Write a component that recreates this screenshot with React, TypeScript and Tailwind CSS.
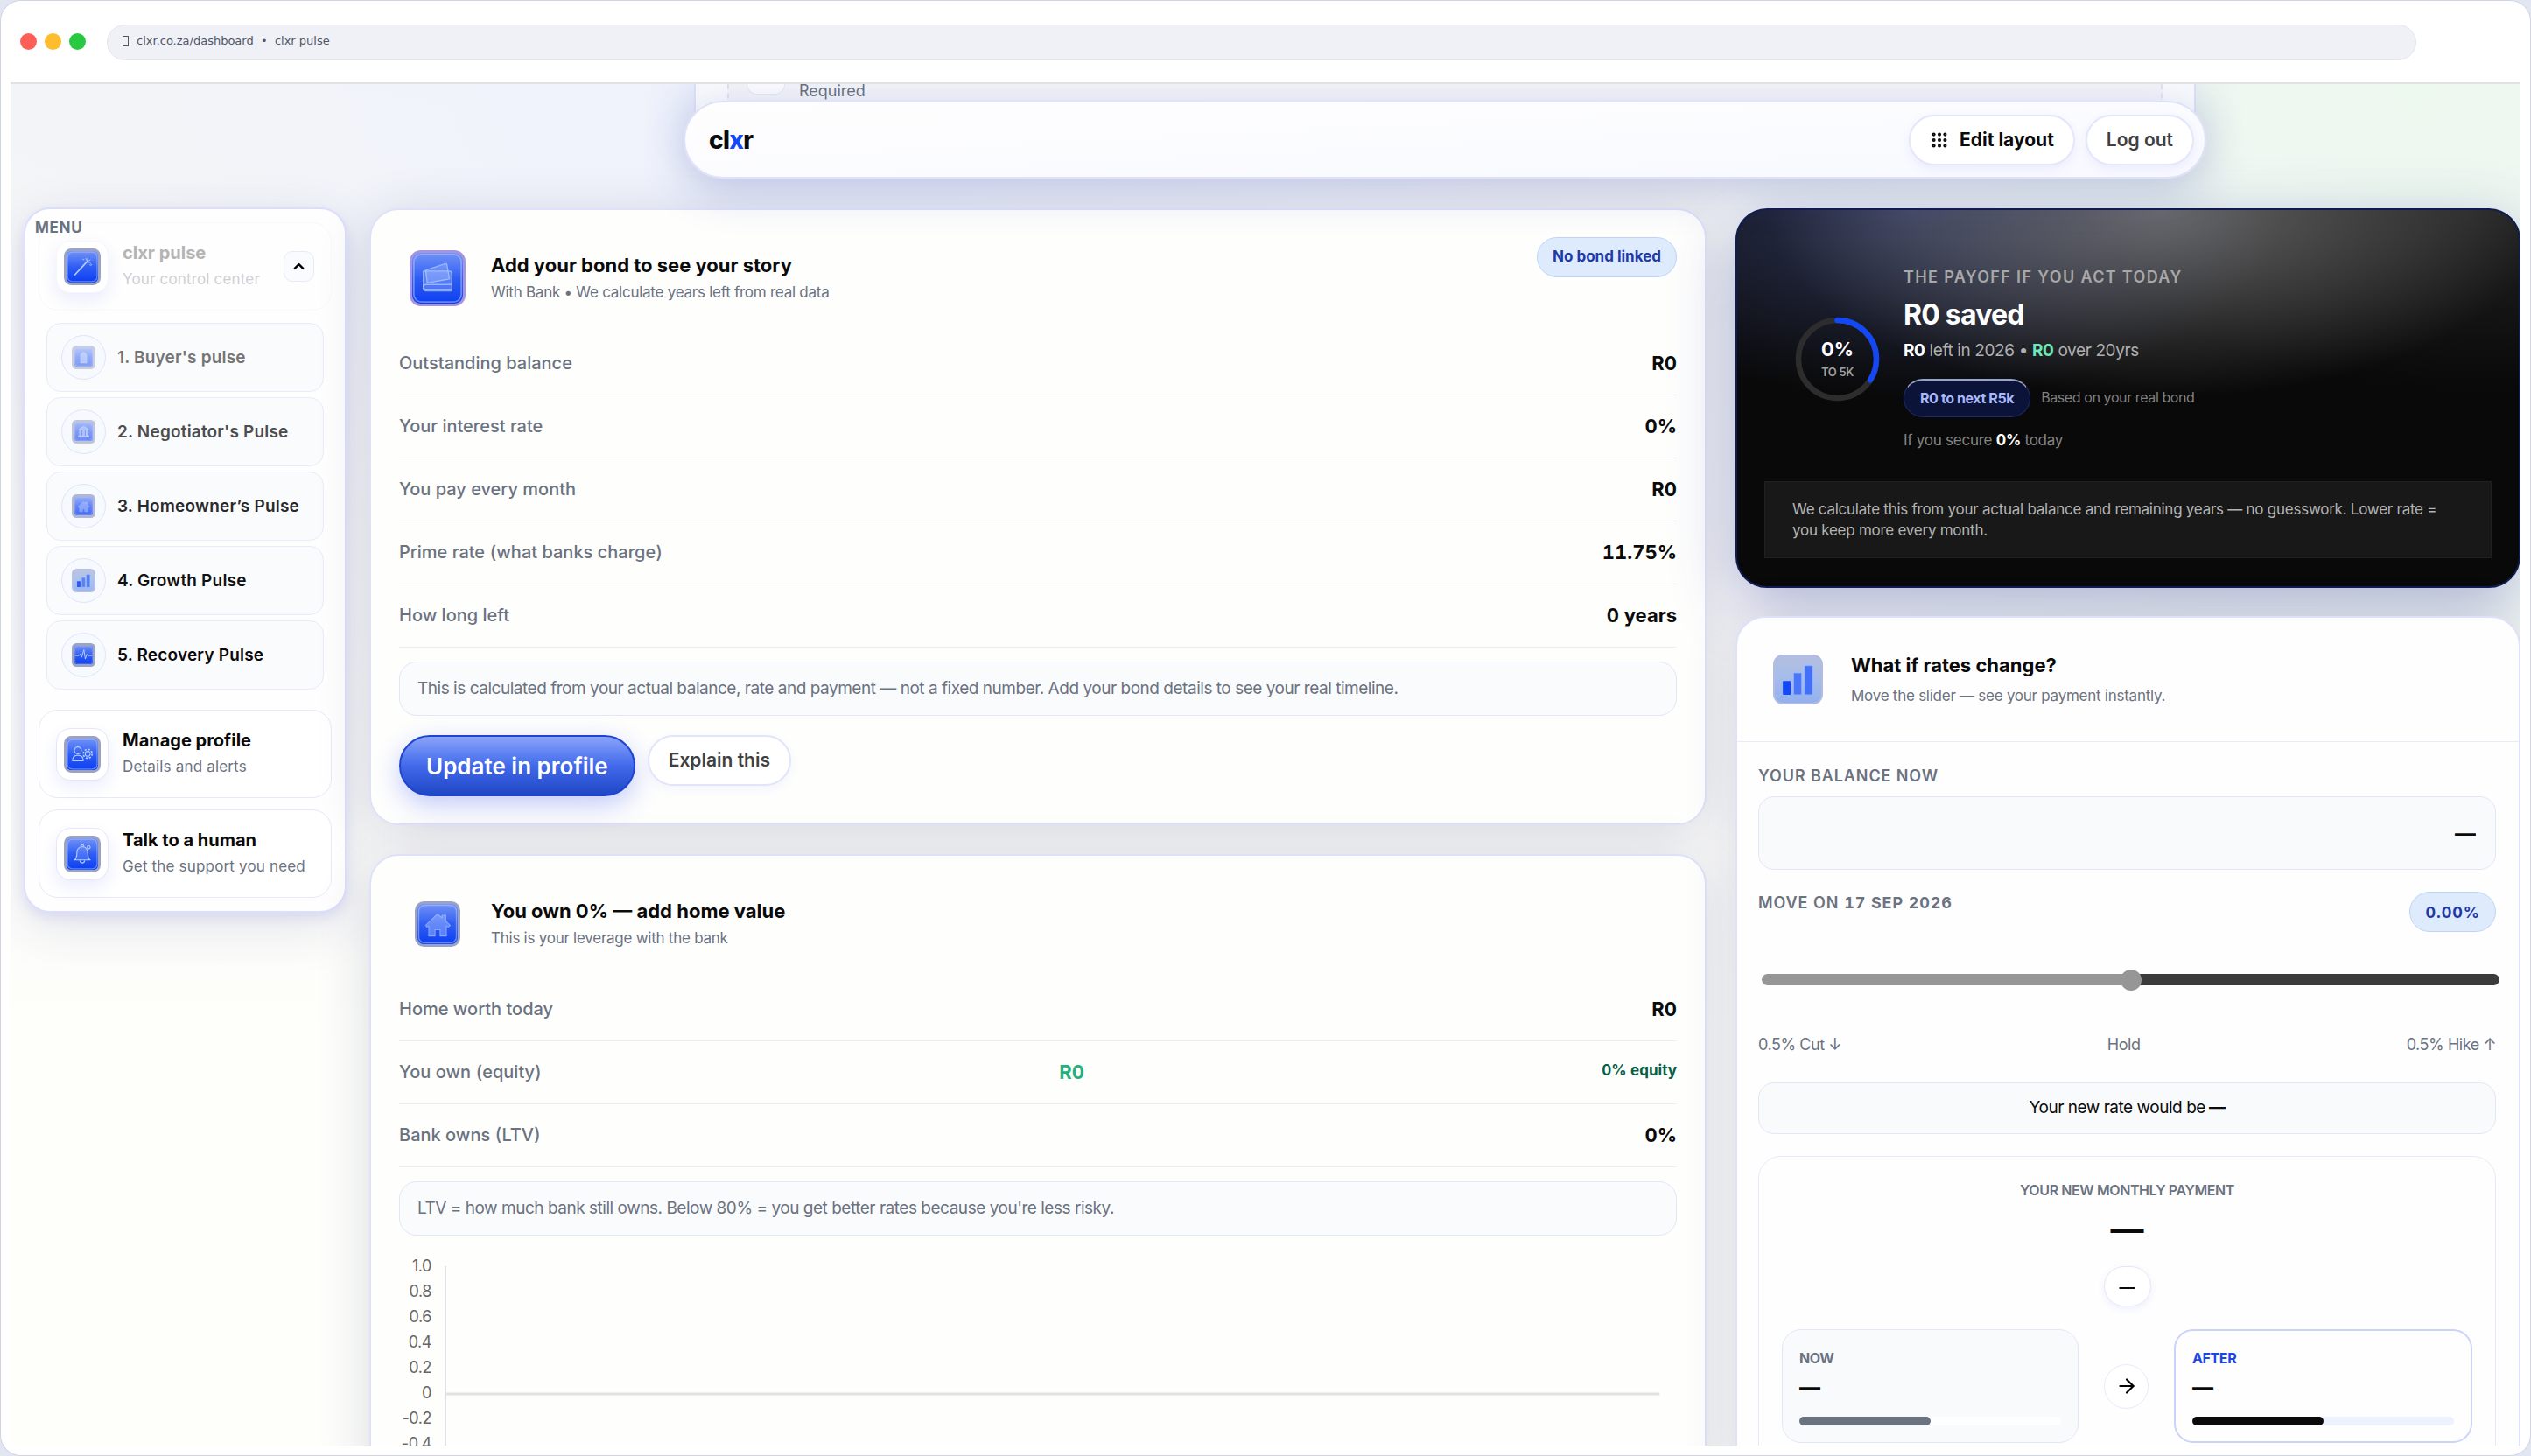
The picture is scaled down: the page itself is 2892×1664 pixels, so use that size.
import React from 'react';
import { ArrowRight, ChevronUp, Grip } from 'lucide-react';

type Glyph = 'wand' | 'door' | 'bank' | 'home' | 'bars' | 'pulse' | 'profile' | 'bell' | 'wallet';

const glyphs: Record<Glyph, React.ReactNode> = {
  wand: (
    <g strokeLinecap="round">
      <path d="M17 48 42 21" strokeWidth="3" />
      <path d="M42 21l-3-6M42 21l6-3M42 21l6 3M42 21l1-7" strokeWidth="1.5" />
      <circle cx="49" cy="28" r="1.5" />
      <circle cx="34" cy="17" r="1" />
    </g>
  ),
  door: <path d="M21 52V24q0-3 3-5l8-6 8 6q3 2 3 5v28z" fill="currentColor" fillOpacity=".6" />,
  bank: (
    <g fill="currentColor" fillOpacity=".45" strokeWidth="2">
      <path d="M15 25q0-3 17-11 17 8 17 11z" />
      <path d="M18 29h5v15h-5zM29.500 29h5v15h-5zM41 29h5v15h-5zM14 46h36v4H14z" />
    </g>
  ),
  home: (
    <path
      d="M13 34 32 16l7 6v-4h6v9l7 7-3 3-3-2v16H36V41h-8v10H18V35l-3 2z"
      fill="currentColor"
      fillOpacity=".4"
      strokeOpacity=".6"
      strokeWidth="1.5"
    />
  ),
  bars: null,
  pulse: <path d="M2 34h14l4-5 5 11 8-26 5 32 5-17 4 5h15" strokeWidth="3" strokeLinejoin="round" />,
  profile: (
    <g strokeWidth="2">
      <circle cx="23" cy="24" r="7" />
      <path d="M12 45q0-11 11-11t11 11z" strokeLinejoin="round" />
      <circle cx="43" cy="31" r="5" />
      <circle cx="43" cy="31" r="9" strokeWidth="3" strokeDasharray="4 3" />
    </g>
  ),
  bell: (
    <g strokeWidth="2" strokeLinejoin="round">
      <path d="M16 44q5-4 5-14 0-12 11-13 11 1 11 13 0 10 5 14z" fill="currentColor" fillOpacity=".2" />
      <path d="M27 45q1 5 5 5t5-5M29 17q0-4 3-4t3 4" />
      <circle cx="45" cy="18" r="3" />
    </g>
  ),
  wallet: (
    <g strokeWidth="1.500" strokeLinejoin="round" strokeOpacity=".7">
      <path d="m17 22 24-8q3-1 3 2l3 17-28 5z" fill="currentColor" fillOpacity=".3" />
      <path d="M14 23h33q3 0 3 3v20H17q-3 0-3-3z" fill="currentColor" fillOpacity=".3" />
      <path d="M14 43q0-3 3-3h33M50 46v2H17q-3 0-3-4" />
    </g>
  ),
};

interface IconTileProps {
  glyph: Glyph;
  className?: string;
}

const IconTile: React.FC<IconTileProps> = ({ glyph, className = '' }) => {
  if (glyph === 'bars') {
    return (
      <span
        className={`block shrink-0 rounded-[20%] border-2 border-[#b3bce0] bg-linear-to-b from-[#b4bfdf] via-[#a4bcec] to-[#93b0ef] ${className}`}
      >
        <svg viewBox="0 0 64 64" className="size-full" aria-hidden="true">
          <rect x="11" y="34" width="11" height="19" rx="1" fill="#1548f5" />
          <rect x="26" y="23" width="11" height="30" rx="1" fill="#4a76f7" stroke="#8fb0ff" />
          <rect x="41" y="13" width="11" height="40" rx="1" fill="#4270f7" stroke="#8fb0ff" />
        </svg>
      </span>
    );
  }
  return (
    <span
      className={`block shrink-0 rounded-[20%] border-3 bg-linear-to-b from-[#7391f5] via-[#2f5df3] to-[#0a3df0] text-[#b5ccff] ${glyph === 'wallet' ? 'border-[#a794e0]' : 'border-[#9ba2c4]'} ${className}`}
    >
      <svg
        viewBox="0 0 64 64"
        className="size-full"
        fill="none"
        stroke="currentColor"
        aria-hidden="true"
      >
        <rect x="2" y="2" width="60" height="60" rx="10" strokeOpacity=".5" strokeWidth="2" />
        {glyphs[glyph]}
      </svg>
    </span>
  );
};

const pulses: { label: string; glyph: Glyph; text: string; icon: string }[] = [
  { label: "1. Buyer's pulse", glyph: 'door', text: 'text-[#757575]', icon: 'opacity-50' },
  { label: "2. Negotiator's Pulse", glyph: 'bank', text: 'text-[#4d4d4f]', icon: 'opacity-60' },
  { label: '3. Homeowner’s Pulse', glyph: 'home', text: 'text-[#29292b]', icon: 'opacity-75' },
  { label: '4. Growth Pulse', glyph: 'bars', text: 'text-[#111112]', icon: 'opacity-90' },
  { label: '5. Recovery Pulse', glyph: 'pulse', text: 'text-[#0a0a0a]', icon: '' },
];

const bondRows = [
  ['Outstanding balance', 'R0'],
  ['Your interest rate', '0%'],
  ['You pay every month', 'R0'],
  ['Prime rate (what banks charge)', '11.75%'],
  ['How long left', '0 years'],
];

const ticks = ['1.0', '0.8', '0.6', '0.4', '0.2', '0', '-0.2', '-0.4'];

interface MenuCardProps {
  title: string;
  subtitle: string;
  glyph: Glyph;
  faded?: boolean;
  children?: React.ReactNode;
}

const MenuCard: React.FC<MenuCardProps> = ({ title, subtitle, glyph, faded, children }) => (
  <div
    className={`flex h-[101px] items-center rounded-[22px] border px-[19px] ${faded ? 'border-[#f8f8fd]' : 'border-[#e8e8f9] bg-white'}`}
  >
    <span
      className={`flex size-[60px] shrink-0 items-center justify-center rounded-2xl border bg-white shadow-[0_8px_18px_rgba(60,80,240,0.1)] ${faded ? 'border-[#f6f6fd]' : 'border-[#e6e6fa]'}`}
    >
      <IconTile glyph={glyph} className="size-[42px]" />
    </span>
    <a href="#menu" className="ml-4 flex-1 whitespace-nowrap">
      <span className={`block text-[20px] leading-7 font-bold ${faded ? 'text-[#b4b4b4]' : 'text-[#0a0a0a]'}`}>
        {title}
      </span>
      <span
        className={`block text-[17px] leading-8 tracking-[0.01em] ${faded ? 'text-[#cfcfd3]' : 'text-[#6b7280]'}`}
      >
        {subtitle}
      </span>
    </a>
    {children}
  </div>
);

const Sidebar: React.FC = () => (
  <nav className="mt-[141px] w-[369px] shrink-0 self-start rounded-[30px] border-2 border-[#dcdffb] bg-[#fefefe] px-[15px] pt-[9px] pb-[15px] shadow-[0_6px_14px_rgba(70,80,220,0.12),0_16px_60px_rgba(40,50,120,0.12)]">
    <h2 className="relative -ml-1 text-[17px] leading-6 font-bold tracking-[0.04em] text-[#6b7280]">MENU</h2>
    <div className="-mt-[18px]">
      <MenuCard title="clxr pulse" subtitle="Your control center" glyph="wand" faded>
        <button
          type="button"
          aria-label="Collapse menu"
          className="flex size-[35px] shrink-0 items-center justify-center rounded-[10px] border border-[#e8ebf6] bg-[#fafbfe] text-black"
        >
          <ChevronUp size={19} strokeWidth={3} />
        </button>
      </MenuCard>
    </div>
    <ul className="mt-3.5 flex flex-col gap-1.5 px-[9px]">
      {pulses.map((p) => (
        <li key={p.label}>
          <a
            href="#pulse"
            className="flex h-[79px] items-center gap-[13px] rounded-2xl border border-[#e9ebf8] bg-[#fafbfd] pl-4"
          >
            <span className="flex size-[51px] shrink-0 items-center justify-center rounded-full border border-[#dfe5fb] bg-[#f6f9fe]">
              <IconTile glyph={p.glyph} className={`size-[27px] ${p.icon}`} />
            </span>
            <span className={`text-[19px] leading-6 font-semibold tracking-[0.01em] whitespace-nowrap ${p.text}`}>
              {p.label}
            </span>
          </a>
        </li>
      ))}
    </ul>
    <div className="mt-[23px] flex flex-col gap-[13px]">
      <MenuCard title="Manage profile" subtitle="Details and alerts" glyph="profile" />
      <MenuCard title="Talk to a human" subtitle="Get the support you need" glyph="bell" />
    </div>
  </nav>
);

const TopBar: React.FC = () => (
  <div className="flex h-[142px] flex-col items-center">
    <div className="flex h-12 w-full max-w-[1716px] border-x-2 border-[#dcdffb] bg-[#f9fafd] px-9 shadow-[0_10px_60px_rgba(40,60,160,0.2)]">
      <div className="flex flex-1 gap-4 border-x-2 border-dashed border-[#e0e3ef] bg-[#f3f4f9] pl-5">
        <span className="h-3 w-11 rounded-b-xl border border-t-0 border-[#e6e8f3] bg-[#fcfcff]" />
        <span className="text-[18px] leading-4 text-[#6b7280]">Required</span>
      </div>
    </div>
    <header className="relative -mt-[29px] flex h-[89px] w-full max-w-[1740px] shrink-0 items-center justify-between rounded-full border-2 border-[#dfe1f8] bg-linear-to-br from-[#fefefe] to-[#f8f9ff] pr-3 pl-[27px] shadow-[0_14px_50px_rgba(40,60,160,0.24)]">
      <a href="#home" className="text-[28px] leading-8 font-extrabold tracking-tight text-[#0a0a0a]">
        cl<span className="text-[#1548f5]">x</span>r
      </a>
      <div className="flex gap-3">
        <button
          type="button"
          className="flex h-[58px] items-center gap-3 rounded-full border-2 border-[#e4e6fa] bg-white px-[22px] text-[21px] font-bold text-[#0a0a0a] shadow-[0_4px_12px_rgba(60,80,240,0.08)]"
        >
          <Grip size={22} strokeWidth={2.5} />
          Edit layout
        </button>
        <button
          type="button"
          className="h-[58px] rounded-full border-2 border-[#e4e6fa] bg-white px-[22px] text-[21px] font-semibold text-[#404040] shadow-[0_4px_12px_rgba(60,80,240,0.08)]"
        >
          Log out
        </button>
      </div>
    </header>
  </div>
);

interface StoryCardProps {
  title: string;
  subtitle: string;
  glyph: Glyph;
  tileClass: string;
  badge?: string;
  children: React.ReactNode;
}

const StoryCard: React.FC<StoryCardProps> = ({ title, subtitle, glyph, tileClass, badge, children }) => (
  <section className="rounded-[34px] border-2 border-[#dfe1fa] bg-[#fefefd] pt-[31px] pr-8 pb-[31px] pl-[32px] shadow-[0_10px_60px_rgba(30,40,100,0.16)]">
    <div className="mb-[16px] flex h-[93px] items-center">
      <span className="flex w-[88px] justify-center">
        <IconTile glyph={glyph} className={tileClass} />
      </span>
      <div className="ml-[17px] flex-1">
        <h2 className="text-[22px] leading-7 font-bold text-[#0a0a0a]">{title}</h2>
        <p className="mt-1 text-[17px] leading-[26px] tracking-[-0.015em] text-[#6b7280]">{subtitle}</p>
      </div>
      {badge && (
        <span className="flex h-[46px] items-center self-start rounded-full border border-[#bfd3f8] bg-[#deebfd] px-[17px] text-[17px] font-bold text-[#1e3aa8]">
          {badge}
        </span>
      )}
    </div>
    {children}
  </section>
);

const Row: React.FC<{ label: string; children: React.ReactNode }> = ({ label, children }) => (
  <div className="flex h-[72px] items-center justify-between border-b border-[#ececf1] pb-0.5 tabular-nums">
    <dt className="text-[20px] leading-7 font-medium text-[#6b7280]">{label}</dt>
    {children}
  </div>
);

const Note: React.FC<{ children: React.ReactNode }> = ({ children }) => (
  <p className="mt-4 flex h-[62px] items-center rounded-[20px] border border-[#e3e6f6] bg-[#fafbfd] px-5 text-[19px] tracking-tight text-[#6b7280]">
    {children}
  </p>
);

const EquityChart: React.FC = () => (
  <div className="mt-5 flex">
    <div className="w-[37px] text-right text-[18px] tracking-tight text-[#666]">
      {ticks.map((t) => (
        <div key={t} className="h-[29px] leading-[29px]">
          {t}
        </div>
      ))}
    </div>
    <svg className="ml-[15px] h-[232px] flex-1" aria-hidden="true">
      <line x1="1" y1="15" x2="1" y2="232" stroke="#e2e2e6" strokeWidth="2" />
      <line x1="1" y1="161" x2="98.600%" y2="161" stroke="#e2e2e4" strokeWidth="3" />
    </svg>
  </div>
);

const PayoffCard: React.FC = () => (
  <section className="rounded-[36px] border-2 border-[#101c50] bg-[#090909] bg-[radial-gradient(ellipse_50%_50%_at_54%_0%,rgba(150,150,150,0.64),transparent),radial-gradient(ellipse_48%_50%_at_22%_0%,rgba(76,88,150,0.55),transparent),radial-gradient(ellipse_50%_48%_at_95%_0%,rgba(70,70,70,0.4),transparent)] px-[31px] pt-16 pb-8 shadow-[0_20px_70px_rgba(60,70,160,0.38)]">
    <div className="flex items-center pl-[35px]">
      <div className="grid size-[97px] shrink-0 place-items-center">
        <svg
          viewBox="0 0 98 98"
          className="col-start-1 row-start-1 size-full"
          fill="none"
          strokeWidth="6.500"
          strokeLinecap="round"
        >
          <circle cx="49" cy="49" r="45" stroke="#2d2d2d" />
          <circle
            cx="49"
            cy="49"
            r="45"
            stroke="#1548f5"
            pathLength="100"
            strokeDasharray="34 66"
            transform="rotate(-90 49 49)"
          />
        </svg>
        <div className="col-start-1 row-start-1 pt-0.5 text-center">
          <div className="text-[22px] leading-7 font-bold text-white">0%</div>
          <div className="text-[13px] leading-6 font-semibold tracking-tight text-[#a0a0a0]">TO 5K</div>
        </div>
      </div>
      <div className="ml-[27px]">
        <h2 className="text-[18px] leading-[26px] font-semibold tracking-[0.075em] text-[#a8a8a8]">
          THE PAYOFF IF YOU ACT TODAY
        </h2>
        <p className="mt-2.5 text-[32px] leading-10 font-bold tracking-tight text-white">R0 saved</p>
        <p className="mt-[7px] text-[19px] leading-7 tracking-[-0.02em] text-[#b0b0b0]">
          <b className="font-bold text-white">R0</b> left in 2026 • <b className="font-bold text-[#6ee7b7]">R0</b> over
          20yrs
        </p>
        <div className="mt-[18px] flex items-center gap-3">
          <span className="flex h-11 items-center rounded-full border border-t-2 border-[#1b2a6b] border-t-[#9aa3c9] bg-[#0b1438] px-[18px] pb-0.5 text-[16px] font-bold tracking-tight text-[#a9b8fb]">
            R0 to next R5k
          </span>
          <span className="pb-0.5 text-[16px] tracking-tight text-[#808080]">Based on your real bond</span>
        </div>
        <p className="mt-[13px] text-[17px] leading-[26px] tracking-[-0.015em] text-[#858585]">
          If you secure <b className="font-bold text-white">0%</b> today
        </p>
      </div>
    </div>
    <p className="mt-[34px] border border-[#202024] bg-[#181818] px-[31px] py-[19px] text-[17px] leading-6 tracking-[-0.015em] text-[#b3b3b3]">
      We calculate this from your actual balance and remaining years — no guesswork. Lower rate =<br />
      you keep more every month.
    </p>
  </section>
);

const RatesCard: React.FC = () => (
  <section className="rounded-[34px] border-2 border-[#dfe1fa] bg-[#fefefe] shadow-[0_10px_60px_rgba(30,40,100,0.16)]">
    <div className="flex h-[142px] items-center border-b border-[#e9ebf5] px-6">
      <span className="flex w-[90px] justify-center">
        <IconTile glyph="bars" className="size-[57px]" />
      </span>
      <div className="ml-4">
        <h2 className="text-[22px] leading-7 font-bold text-[#0a0a0a]">What if rates change?</h2>
        <p className="mt-2 text-[17px] leading-[26px] tracking-[-0.015em] text-[#6b7280]">
          Move the slider — see your payment instantly.
        </p>
      </div>
    </div>
    <div className="pt-[26px] pr-[26px] pb-10 pl-6">
      <label htmlFor="balance" className="block text-[18px] leading-[26px] font-semibold tracking-wider text-[#6b7280]">
        YOUR BALANCE NOW
      </label>
      <input
        id="balance"
        readOnly
        value="—"
        className="mt-2.5 block h-[84px] w-full rounded-[18px] border border-[#e3e6f8] bg-[#f9fafc] px-[22px] text-right text-[24px] font-bold text-[#0a0a0a]"
      />
      <div className="mt-[25px] flex items-start justify-between tabular-nums">
        <label htmlFor="move" className="text-[18px] leading-[26px] font-semibold tracking-wider text-[#6b7280]">
          MOVE ON <b className="font-bold">17 SEP 2026</b>
        </label>
        <output
          htmlFor="move"
          className="flex h-[46px] items-center rounded-full border border-[#bfd3f8] bg-[#deebfd] px-[17px] text-[18px] font-bold tracking-wider text-[#1e3aa8]"
        >
          0.00%
        </output>
      </div>
      <input
        id="move"
        type="range"
        min={-50}
        max={50}
        defaultValue={0}
        className="mt-12 ml-1 block h-[13px] w-full appearance-none rounded-full bg-[linear-gradient(to_right,#969696_50%,#3b3b3b_50%)] [&::-webkit-slider-thumb]:size-6 [&::-webkit-slider-thumb]:appearance-none [&::-webkit-slider-thumb]:rounded-full [&::-webkit-slider-thumb]:bg-[#969696]"
      />
      <div className="mt-[55px] flex justify-between text-[18px] leading-[26px] tracking-tight text-[#6b7280]">
        <span>0.5% Cut ↓</span>
        <span>Hold</span>
        <span>0.5% Hike ↑</span>
      </div>
      <p className="mt-[30px] flex h-[59px] items-center justify-center gap-1 rounded-[18px] border border-[#e3e6f6] bg-[#f9fafc] text-[19px] tracking-tight text-[#0a0a0a]">
        Your new rate would be <b className="font-bold">—</b>
      </p>
      <div className="mt-[25px] flex flex-col items-center rounded-[26px] border border-[#e8e9f8] px-[26px] pt-[25px] pb-8">
        <h3 className="text-[16px] leading-[26px] font-semibold tracking-tight text-[#6b7280]">
          YOUR NEW MONTHLY PAYMENT
        </h3>
        <p className="mt-2 text-[38px] leading-[46px] font-extrabold text-[#0a0a0a]">—</p>
        <span className="mt-5 flex h-[46px] items-center rounded-full border border-[#e4e6fa] bg-white px-[17px] text-[18px] font-semibold text-[#0a0a0a] shadow-[0_3px_8px_rgba(60,80,240,0.08)]">
          —
        </span>
        <div className="mt-[26px] flex w-full items-center gap-[29px]">
          <div className="h-[130px] flex-1 rounded-[22px] border border-[#e3e6fa] bg-[#f9fafc] px-[19px] pt-5">
            <h4 className="text-[16px] leading-6 font-bold tracking-tight text-[#6b7280]">NOW</h4>
            <p className="mt-1.5 text-[24px] leading-8 font-bold text-[#0a0a0a]">—</p>
            <div className="mt-[17px] h-2.5 rounded-full bg-white">
              <div className="h-full w-1/2 rounded-full bg-[#6b7280]" />
            </div>
          </div>
          <span className="flex size-[51px] items-center justify-center rounded-full border border-[#e8eafb] bg-white text-black">
            <ArrowRight size={26} />
          </span>
          <div className="h-[130px] flex-1 rounded-[22px] border-2 border-[#ccd3f9] bg-[#fefefe] px-[19px] pt-[19px]">
            <h4 className="text-[16px] leading-6 font-bold tracking-tight text-[#1d45e6]">AFTER</h4>
            <p className="mt-1.5 text-[24px] leading-8 font-bold text-[#0a0a0a]">—</p>
            <div className="mt-[17px] h-2.5 rounded-full bg-[#eef2fe]">
              <div className="h-full w-1/2 rounded-full bg-[#0a0a0a]" />
            </div>
          </div>
        </div>
      </div>
    </div>
  </section>
);

export default function App() {
  return (
    <div className="h-screen bg-[#e2e6f2] font-['Inter',sans-serif]">
      <div className="flex h-full flex-col overflow-hidden rounded-[24px] border border-[#ced4e6] bg-white px-[11px] pb-[11px]">
        <div className="flex h-[95px] shrink-0 items-center border-b-2 border-[#e1e2e1] pl-[11px]">
          <div className="flex gap-[9px]">
            <span className="size-[19px] rounded-full bg-[#ff5f57]" />
            <span className="size-[19px] rounded-full bg-[#febc2e]" />
            <span className="size-[19px] rounded-full bg-[#28c840]" />
          </div>
          <div className="mt-0.5 mr-[119px] ml-6 flex h-[41px] flex-1 items-center gap-[9px] rounded-full border border-[#e3e5ec] bg-[#f0f1f6] pb-1 pl-[17px] font-['DejaVu_Sans',sans-serif] text-[13px] whitespace-pre text-[#4f5668]">
            <span className="h-3 w-[7px] border border-[#4f5668]" />
            {'clxr.co.za/dashboard  •  clxr pulse'}
          </div>
        </div>
        <div className="flex-1 overflow-hidden bg-[#fefefc] bg-[radial-gradient(ellipse_1000px_600px_at_32%_0%,#eef2fd,transparent),radial-gradient(ellipse_900px_1100px_at_96%_0%,#edf8ef,transparent),linear-gradient(to_bottom,#f3f4f6,#fefefb_70%)]">
          <div className="flex gap-[26px] pl-[15px]">
            <Sidebar />
            <div className="flex-1">
              <TopBar />
              <div className="flex items-start gap-[33px]">
                <main className="flex flex-1 flex-col gap-[33px]">
                  <StoryCard
                    title="Add your bond to see your story"
                    subtitle="With Bank • We calculate years left from real data"
                    glyph="wallet"
                    tileClass="size-16"
                    badge="No bond linked"
                  >
                    <dl>
                      {bondRows.map(([label, value]) => (
                        <Row key={label} label={label}>
                          <dd className="text-[22px] leading-7 font-bold text-[#0a0a0a]">{value}</dd>
                        </Row>
                      ))}
                    </dl>
                    <Note>
                      This is calculated from your actual balance, rate and payment — not a fixed number. Add your bond
                      details to see your real timeline.
                    </Note>
                    <div className="mt-[22px] flex items-start gap-3.5">
                      <button
                        type="button"
                        className="h-[70px] rounded-full border-2 border-[#1f45d0] bg-linear-to-b from-[#8ba3fa] via-[#4169ea] to-[#1f47c6] px-[29px] text-[26px] font-semibold text-white shadow-[0_10px_30px_rgba(40,70,240,0.28)]"
                      >
                        Update in profile
                      </button>
                      <button
                        type="button"
                        className="h-[58px] rounded-full border-2 border-[#e2e5fa] bg-white px-[22px] text-[21px] font-semibold text-[#404040] shadow-[0_4px_12px_rgba(60,80,240,0.06)]"
                      >
                        Explain this
                      </button>
                    </div>
                  </StoryCard>
                  <StoryCard
                    title="You own 0% — add home value"
                    subtitle="This is your leverage with the bank"
                    glyph="home"
                    tileClass="size-[52px]"
                  >
                    <dl>
                      <Row label="Home worth today">
                        <dd className="text-[22px] leading-7 font-bold text-[#0a0a0a]">R0</dd>
                      </Row>
                      <Row label="You own (equity)">
                        <dd className="text-[22px] leading-7 font-bold text-[#22b07d]">R0</dd>
                        <dd className="pb-1 text-[17px] leading-6 font-bold text-[#065f46]">0% equity</dd>
                      </Row>
                      <Row label="Bank owns (LTV)">
                        <dd className="text-[22px] leading-7 font-bold text-[#0a0a0a]">0%</dd>
                      </Row>
                    </dl>
                    <Note>
                      LTV = how much bank still owns. Below 80% = you get better rates because you're less risky.
                    </Note>
                    <EquityChart />
                  </StoryCard>
                </main>
                <aside className="flex w-[897px] shrink-0 flex-col gap-8">
                  <PayoffCard />
                  <RatesCard />
                </aside>
              </div>
            </div>
          </div>
        </div>
      </div>
    </div>
  );
}
